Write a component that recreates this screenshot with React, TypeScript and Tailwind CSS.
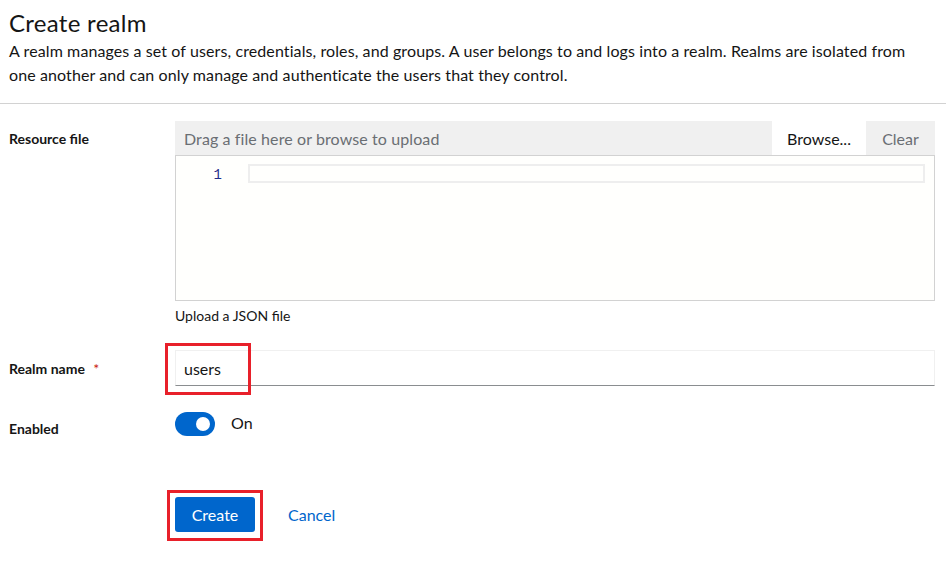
import React from "react";

export default function App() {
  return (
    <div
      className="w-[946px] h-[578px] bg-white text-[#151515] overflow-hidden"
      style={{ fontFamily: "Lato, 'Liberation Sans', sans-serif" }}
    >
      <section className="px-[9px] pt-[8px] pb-[16px] border-b border-[#d2d2d2]">
        <h1 className="text-[24px] leading-[30px] font-normal tracking-[0.3px] text-[#151515]">Create realm</h1>
        <p className="mt-px text-[16px] leading-[24px] tracking-[0.1px] max-w-[915px] text-[#151515]">
          A realm manages a set of users, credentials, roles, and groups. A user belongs to and logs into a realm. Realms are isolated from one another and can only manage and authenticate the users that they control.
        </p>
      </section>

      <form className="px-[9px] pt-[17px]" onSubmit={(e) => e.preventDefault()}>
        {/* Resource file */}
        <div className="flex">
          <div className="w-[166px] shrink-0 pt-[9px] text-[14px] leading-[18px] font-bold">Resource file</div>
          <div className="flex-1 mr-[2px]">
            <div className="flex h-[34px] bg-[#f0f0f0]">
              <div className="flex-1 flex items-center pl-[9px] pt-[2px] text-[16px] tracking-[0.1px] text-[#6a6e73]">
                Drag a file here or browse to upload
              </div>
              <button type="button" className="w-[94px] bg-white pt-[2px] text-[16px] text-[#151515] flex items-center justify-center">
                Browse...
              </button>
              <button type="button" className="w-[69px] pt-[2px] text-[16px] text-[#6a6e73] flex items-center justify-center">
                Clear
              </button>
            </div>
            <div className="h-[146px] border border-[#d2d2d2] bg-[#fffffd] flex">
              <div
                className="w-[46px] pt-[10px] text-right text-[14px] leading-[18px] text-[#1f2d8a]"
                style={{ fontFamily: "'Liberation Mono', monospace" }}
              >
                1
              </div>
              <div className="flex-1 pl-[26px] pr-[9px] pt-[8px]">
                <div className="h-[19px] border-2 border-[#eeeeee]" />
              </div>
            </div>
            <div className="mt-[6px] text-[14px] leading-[18px] text-[#151515]">Upload a JSON file</div>
          </div>
        </div>

        {/* Realm name */}
        <div className="flex mt-[25px]">
          <div className="w-[166px] shrink-0 pt-[10px] text-[14px] leading-[18px] font-bold">
            Realm name <span className="ml-[5px] text-[#c9190b] font-normal">*</span>
          </div>
          <div className="flex-1 mr-[2px] relative">
            <div className="h-[36px] border border-[#f0f0f0] border-b-[#8a8d90] flex items-center pl-[8px] pt-[2px] text-[16px]">
              users
            </div>
            <div className="absolute left-[-10px] top-[-7px] w-[86px] h-[52px] border-[3px] border-[#e8202a] pointer-events-none" />
          </div>
        </div>

        {/* Enabled */}
        <div className="flex mt-[24px]">
          <div className="w-[166px] shrink-0 pt-[10px] text-[14px] leading-[18px] font-bold">Enabled</div>
          <div className="flex items-center gap-[16px]">
            <div className="w-[40px] h-[24px] rounded-full bg-[#0066cc] relative">
              <div className="absolute right-[5px] top-[5px] w-[14px] h-[14px] rounded-full bg-white" />
            </div>
            <span className="text-[16px] text-[#151515] -mt-[2px]">On</span>
          </div>
        </div>

        {/* Actions */}
        <div className="flex mt-[59px] pl-[166px] items-center">
          <div className="relative">
            <button type="button" className="w-[80px] h-[35px] rounded-[3px] bg-[#0066cc] text-white text-[16px]">
              Create
            </button>
            <div className="absolute left-[-8px] top-[-7px] w-[96px] h-[51px] border-[3px] border-[#e8202a] pointer-events-none" />
          </div>
          <button type="button" className="ml-[17px] px-[16px] h-[35px] text-[16px] text-[#0066cc]">
            Cancel
          </button>
        </div>
      </form>
    </div>
  );
}
